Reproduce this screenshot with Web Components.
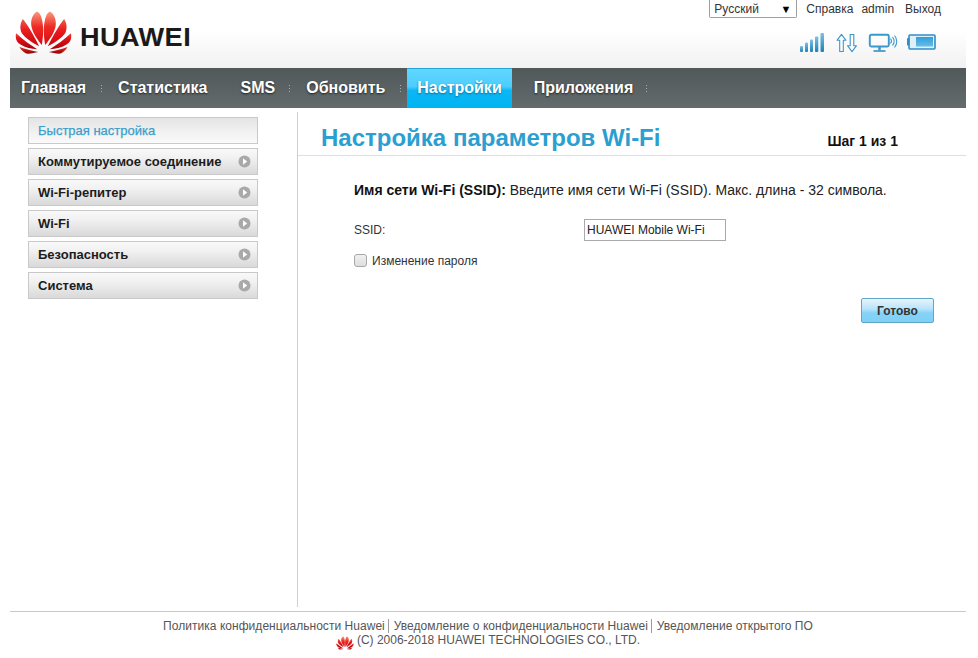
<!DOCTYPE html>
<html lang="ru">
<head>
<meta charset="utf-8">
<title>HUAWEI Mobile Wi-Fi</title>
<style>
html,body{margin:0;padding:0;background:#fff;}
body{font-family:"Liberation Sans",Arial,sans-serif;color:#333;}
</style>
</head>
<body>
<hw-page>
  <hw-header slot="header"></hw-header>
  <hw-nav slot="nav">
    <hw-tab style="--pl:11px;--pr:16px">Главная</hw-tab>
    <hw-tab style="--pl:16px;--pr:17px" nosep>Статистика</hw-tab>
    <hw-tab style="--pl:16px;--pr:15px">SMS</hw-tab>
    <hw-tab style="--pl:16px;--pr:16px">Обновить</hw-tab>
    <hw-tab style="--pl:10px;--pr:10px;margin-left:6px" active nosep>Настройки</hw-tab>
    <hw-tab style="--pl:22px;--pr:14px">Приложения</hw-tab>
  </hw-nav>
  <hw-menu slot="side">
    <hw-menu-item current>Быстрая настройка</hw-menu-item>
    <hw-menu-item arrow>Коммутируемое соединение</hw-menu-item>
    <hw-menu-item arrow>Wi-Fi-репитер</hw-menu-item>
    <hw-menu-item arrow>Wi-Fi</hw-menu-item>
    <hw-menu-item arrow>Безопасность</hw-menu-item>
    <hw-menu-item arrow>Система</hw-menu-item>
  </hw-menu>
  <hw-wizard slot="main"></hw-wizard>
  <hw-footer slot="footer"></hw-footer>
</hw-page>
<script>
function def(name, css, html, init){
  customElements.define(name, class extends HTMLElement{
    connectedCallback(){
      if(this.shadowRoot) return;
      const r=this.attachShadow({mode:'open'});
      r.innerHTML='<style>'+css+'</style>'+html;
      if(init) init(this,r);
    }
  });
}
const side=`<path fill="url(#p1)" d="M105 120C100 90 98 60 108 32 111 25 115 20 120 20 130 25 138 40 137 58 136 80 118 105 105 120Z"/>
<path fill="url(#p2)" d="M113 124C125 100 140 70 162 42 170 55 172 70 165 85 155 100 130 115 113 124Z"/>
<path fill="url(#p3)" d="M119 133C140 120 160 105 182 85 186 100 180 112 170 118 155 128 135 132 119 133Z"/>
<path fill="url(#p4)" d="M116 141C135 137 155 132 172 126 165 138 155 146 147 146 135 146 125 143 116 141Z"/>`;
const petals=`<defs>
<linearGradient id="p1" x1="0" y1="1" x2="0" y2="0"><stop offset="0" stop-color="#d80c12"/><stop offset=".55" stop-color="#ee2a24"/><stop offset="1" stop-color="#f89b80"/></linearGradient>
<linearGradient id="p2" x1="0" y1="1" x2="0" y2="0"><stop offset="0" stop-color="#c8060c"/><stop offset=".6" stop-color="#ea1c1e"/><stop offset="1" stop-color="#f25a48"/></linearGradient>
<linearGradient id="p3" x1="0" y1="1" x2="0" y2="0"><stop offset="0" stop-color="#a50008"/><stop offset=".7" stop-color="#e4141a"/><stop offset="1" stop-color="#f04a3a"/></linearGradient>
<linearGradient id="p4" x1="0" y1="0" x2="0" y2="1"><stop offset="0" stop-color="#f02a24"/><stop offset="1" stop-color="#900006"/></linearGradient>
</defs><g>${side}</g><g transform="matrix(-1 0 0 1 200 0)">${side}</g>`;
def('hw-petals',':host{display:block;line-height:0}svg{display:block;width:100%;height:100%}',
  `<svg viewBox="15 15 170 135" aria-hidden="true">${petals}</svg>`);

def('hw-logo',`:host{display:flex;align-items:flex-start;width:180px}
hw-petals{width:57px;height:45px}
.w{font:bold 25px/1 "Liberation Sans",Arial,sans-serif;color:#1a1a1a;letter-spacing:.4px;margin-left:8px;margin-top:15px;white-space:nowrap;transform:scaleX(1.085);transform-origin:0 50%}`,
  `<hw-petals></hw-petals><span class="w">HUAWEI</span>`);

def('hw-status',`:host{display:flex;align-items:flex-start}svg{display:block;overflow:visible}`,
`<svg width="146" height="30" viewBox="0 0 146 30" aria-hidden="true">
<defs><linearGradient id="b" x1="0" y1="0" x2="0" y2="1"><stop offset="0" stop-color="#7cc2e6"/><stop offset="1" stop-color="#1f7fb5"/></linearGradient>
<linearGradient id="bf" x1="0" y1="0" x2="0" y2="1"><stop offset="0" stop-color="#2f9fdb"/><stop offset="1" stop-color="#68bde8"/></linearGradient></defs>
<g fill="url(#b)">
<rect x="0" y="13" width="3" height="6" rx="1"/>
<rect x="5" y="9.500" width="3" height="9.500" rx="1"/>
<rect x="10" y="6.500" width="3" height="12.500" rx="1"/>
<rect x="15" y="3.500" width="3.300" height="15.500" rx="1"/>
<rect x="20.500" y="0" width="3.500" height="19" rx="1"/>
</g>
<g fill="#fff" stroke="#3c97c8" stroke-width="1.100" stroke-linejoin="round" transform="translate(-1 0)">
<path d="M42.500 1.300 38 7.300h2.700V18.500h3.600V7.300H47z"/>
<path d="M53 18.700 48.500 12.700h2.700V1.500h3.600v11.200h2.700z"/>
</g>
<g fill="none" stroke="#3a98cc">
<rect x="69.800" y="1.800" width="19" height="11.700" rx="1.500" stroke-width="1.900"/>
<path d="M73.500 18h12" stroke-width="1.700"/>
<path d="M79.500 14v3.500" stroke-width="2.500"/>
<path d="M90.500 5.500c1.200 1.500 1.200 3.500 0 5M92.500 4c2 2.500 2 6 0 8.500M94.500 2.500c3 3.500 3 8.500 0 12" stroke-width="1.100"/>
</g>
<rect x="109" y="2" width="26" height="14" rx="1" fill="#dff0f9" stroke="#2f8fc4" stroke-width="1.600"/>
<rect x="107" y="5" width="2.500" height="7.500" rx=".8" fill="#2f8fc4"/>
<rect x="116" y="4" width="17" height="9.500" fill="url(#bf)"/>
</svg>`);

def('hw-lang',`:host{display:flex;align-items:center;justify-content:space-between;box-sizing:border-box;width:88px;height:18px;border:1px solid #a0a0a0;border-top:none;border-radius:0 0 2px 2px;padding:1px 5px 0 4px;background:#fff;font-size:12px;color:#333}
.a{font-size:11px;color:#000;line-height:1}`,`<span>Русский</span><span class="a">▼</span>`);

def('hw-header',`:host{display:flex;justify-content:space-between;height:68px;background:linear-gradient(#fff 0,#fff 45%,#f1f1f1 100%);font-size:12px;color:#333}
.l{padding:10px 0 0 5px}
.r{display:flex;flex-direction:column;align-items:flex-end}
.top{display:flex;align-items:flex-start;padding-right:25px;height:33px}
.links{display:flex;padding:1px 0 0 9px;line-height:16px;height:16px}
.links span:nth-child(1){margin-right:8px}
.links span:nth-child(2){margin-right:11px}
hw-status{margin-right:20px}`,
`<div class="l"><hw-logo></hw-logo></div>
<div class="r"><div class="top"><hw-lang></hw-lang><div class="links"><span>Справка</span><span>admin</span><span>Выход</span></div></div><hw-status></hw-status></div>`);

def('hw-tab',`:host{display:flex;align-items:center;height:40px;box-sizing:border-box;padding:0 var(--pr,16px) 1px var(--pl,16px);font:bold 16px "Liberation Sans",Arial,sans-serif;color:#fff;text-shadow:0 1px 2px #222;white-space:nowrap;position:relative}
:host([active]){background:linear-gradient(#62d7ff 0,#4ccdfd 45%,#0cb6f4 55%,#00b4f2 100%);border-top:1px solid #1ea8dc;padding-bottom:2px;text-shadow:0 1px 2px #0a6f98}
.s{position:absolute;right:0;top:17px;width:1px;height:8px;background:repeating-linear-gradient(#aab0b2 0 1px,transparent 1px 3px)}
:host([nosep]) .s{display:none}`,
`<slot></slot><span class="s"></span>`);

def('hw-nav',`:host{display:flex;height:40px;background:linear-gradient(#50585a,#636b6d)}`,`<slot></slot>`);

def('hw-menu-item',`:host{display:flex;align-items:center;justify-content:space-between;box-sizing:border-box;height:27px;border:1px solid #c9c9c9;padding:0 6px 0 9px;background:linear-gradient(#f9f9f9,#f1f1f1 35%,#d9d9d9);font:bold 13px "Liberation Sans",Arial,sans-serif;color:#1c1c1c;white-space:nowrap}
:host([current]){color:#3a9fcc;font-weight:normal;-webkit-text-stroke:.25px #3a9fcc;background:linear-gradient(#e4e4e4,#f2f2f2 60%,#fafafa)}
svg{display:none}
:host([arrow]) svg{display:block}`,
`<slot></slot><svg width="13" height="13" viewBox="0 0 13 13" aria-hidden="true"><circle cx="6.500" cy="6.500" r="6" fill="#a9a9a9"/><path d="M5 3.300 9.200 6.500 5 9.700z" fill="#fff"/></svg>`);

def('hw-menu',`:host{display:flex;flex-direction:column;gap:4px;width:230px}`,`<slot></slot>`);

def('hw-wizard',`:host{display:block;font:14px "Liberation Sans",Arial,sans-serif;color:#333}
.head{display:flex;align-items:baseline;justify-content:space-between;height:44px;box-sizing:border-box;border-bottom:1px solid #dfdfdf;padding:11px 68px 0 23px}
h1{margin:0;font:bold 24px/30px "Liberation Sans",Arial,sans-serif;color:#2a9fd0}
.step{font-weight:bold;color:#111;font-size:14px}
.body{padding:26px 32px 0 56px}
p{margin:0;line-height:16px;color:#222}
b{color:#111}
.row{display:flex;align-items:center;margin-top:21px;height:22px;font-size:12px}
.lab{width:230px}
.inp{box-sizing:border-box;width:142px;height:22px;border:1px solid #a9a9a9;padding:0 2px;line-height:20px;font-size:12px;color:#222;background:#fff;white-space:nowrap}
.chk{display:flex;align-items:center;gap:5px;margin-top:12px;font-size:12px;height:15px;color:#333}
input{appearance:none;-webkit-appearance:none;margin:0;width:13px;height:13px;box-sizing:border-box;border:1px solid #a8a8a8;border-radius:3px;background:linear-gradient(#f0f0f0,#dedede)}
.act{display:flex;justify-content:flex-end;margin-top:30px}
button{box-sizing:border-box;width:73px;height:25px;border:1px solid #5fa6c9;border-radius:2px;padding:0;font:bold 12px "Liberation Sans",Arial,sans-serif;color:#333;background:linear-gradient(#e6f5fd,#b5e2fa 45%,#85d3f7 60%,#7fd0f6)}`,
`<div class="head"><h1>Настройка параметров Wi-Fi</h1><span class="step">Шаг 1 из 1</span></div>
<div class="body">
<p><b>Имя сети Wi-Fi (SSID):</b> Введите имя сети Wi-Fi (SSID). Макс. длина - 32 символа.</p>
<div class="row"><span class="lab">SSID:</span><div class="inp">HUAWEI Mobile Wi-Fi</div></div>
<label class="chk"><input type="checkbox"><span>Изменение пароля</span></label>
<div class="act"><button type="button">Готово</button></div>
</div>`);

def('hw-footer',`:host{display:block;border-top:1px solid #c8c8c8;padding-top:7px;font:12px/14px "Liberation Sans",Arial,sans-serif;color:#555;text-align:center;white-space:nowrap}
.a{letter-spacing:.04px}
.a span+span{border-left:1px solid #9a9a9a;margin-left:3px;padding-left:5px}
.c{display:flex;justify-content:center;align-items:flex-start;gap:3px}
hw-petals{width:18px;height:14px;margin-top:3px}`,
`<div class="a"><span>Политика конфиденциальности Huawei</span><span>Уведомление о конфиденциальности Huawei</span><span>Уведомление открытого ПО</span></div>
<div class="c"><hw-petals></hw-petals><span>(C) 2006-2018 HUAWEI TECHNOLOGIES CO., LTD.</span></div>`);

def('hw-page',`:host{display:block;width:956px;margin:0 0 0 10px}
.mid{display:grid;grid-template-columns:287px 1fr;height:503px}
.side{padding:9px 0 0 18px;box-sizing:border-box}
.main{display:flex;flex-direction:column;border-left:1px solid #cfcfcf;margin-top:4px;height:495px;box-sizing:border-box}`,
`<slot name="header"></slot><slot name="nav"></slot>
<div class="mid"><div class="side"><slot name="side"></slot></div><div class="main"><slot name="main"></slot></div></div>
<slot name="footer"></slot>`);
</script>
</body>
</html>
